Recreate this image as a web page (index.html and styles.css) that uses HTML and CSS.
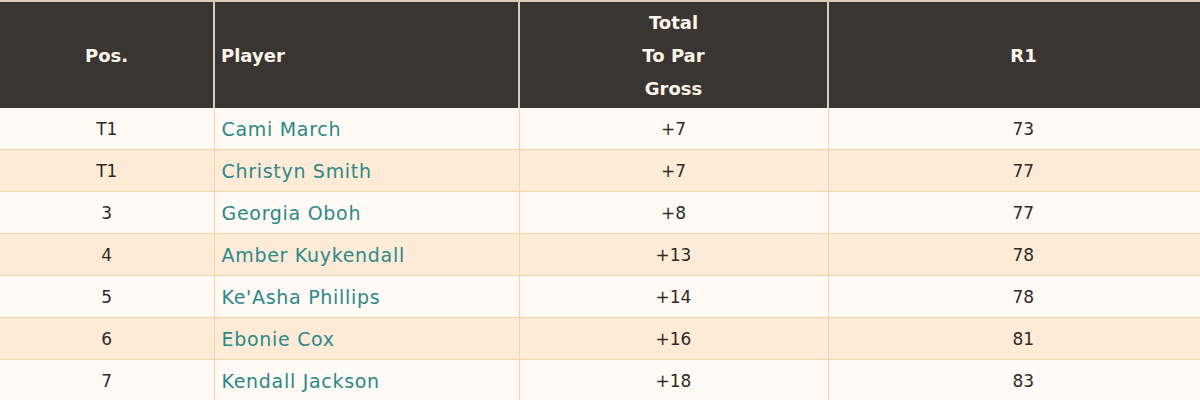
FILE: index.html
```html
<!DOCTYPE html>
<html>
<head>
<meta charset="utf-8">
<link rel="stylesheet" href="styles.css">
</head>
<body>
<table class="board">
  <colgroup>
    <col class="c-pos"><col class="c-player"><col class="c-total"><col class="c-r1">
  </colgroup>
  <thead>
    <tr>
      <th class="center">Pos.</th>
      <th class="left">Player</th>
      <th class="center">Total<br>To Par<br>Gross</th>
      <th class="center">R1</th>
    </tr>
  </thead>
  <tbody>
    <tr><td>T1</td><td class="name">Cami March</td><td>+7</td><td>73</td></tr>
    <tr><td>T1</td><td class="name">Christyn Smith</td><td>+7</td><td>77</td></tr>
    <tr><td>3</td><td class="name">Georgia Oboh</td><td>+8</td><td>77</td></tr>
    <tr><td>4</td><td class="name">Amber Kuykendall</td><td>+13</td><td>78</td></tr>
    <tr><td>5</td><td class="name">Ke'Asha Phillips</td><td>+14</td><td>78</td></tr>
    <tr><td>6</td><td class="name">Ebonie Cox</td><td>+16</td><td>81</td></tr>
    <tr><td>7</td><td class="name">Kendall Jackson</td><td>+18</td><td>83</td></tr>
  </tbody>
</table>
</body>
</html>
```
FILE: styles.css
```css
html, body {
  margin: 0;
  padding: 0;
  background: #fffaf3;
  overflow: hidden;
}
.board {
  width: 1218px;
  border-collapse: collapse;
  table-layout: fixed;
  font-family: "DejaVu Sans", "Liberation Sans", sans-serif;
  border-top: 2px solid #d9cdb8;
}
.c-pos { width: 214px; }
.c-player { width: 305px; }
.c-total { width: 309px; }
.c-r1 { width: 390px; }
.board th {
  background: #3b3532;
  color: #fbf6ec;
  font-weight: 700;
  font-size: 18px;
  line-height: 33px;
  height: 106px;
  padding: 0;
  border-left: 2px solid #d8cfc2;
  vertical-align: middle;
}
.board th:first-child { border-left: none; }
.board th.center { text-align: center; }
.board th.left { text-align: left; padding-left: 6px; }
.board td {
  height: 41px;
  padding: 0;
  text-align: center;
  font-size: 17px;
  color: #2e2926;
  border-left: 1px solid #f6d3ad;
  border-bottom: 1px solid #f6d3ad;
}
.board td:first-child { border-left: none; }
.board td.name {
  text-align: left;
  padding-left: 7px;
  font-size: 19px;
  letter-spacing: 0.7px;
  color: #2c898b;
}
.board tbody tr:nth-child(odd) td { background: #fffaf3; }
.board tbody tr:nth-child(even) td { background: #fdebd7; }
```
